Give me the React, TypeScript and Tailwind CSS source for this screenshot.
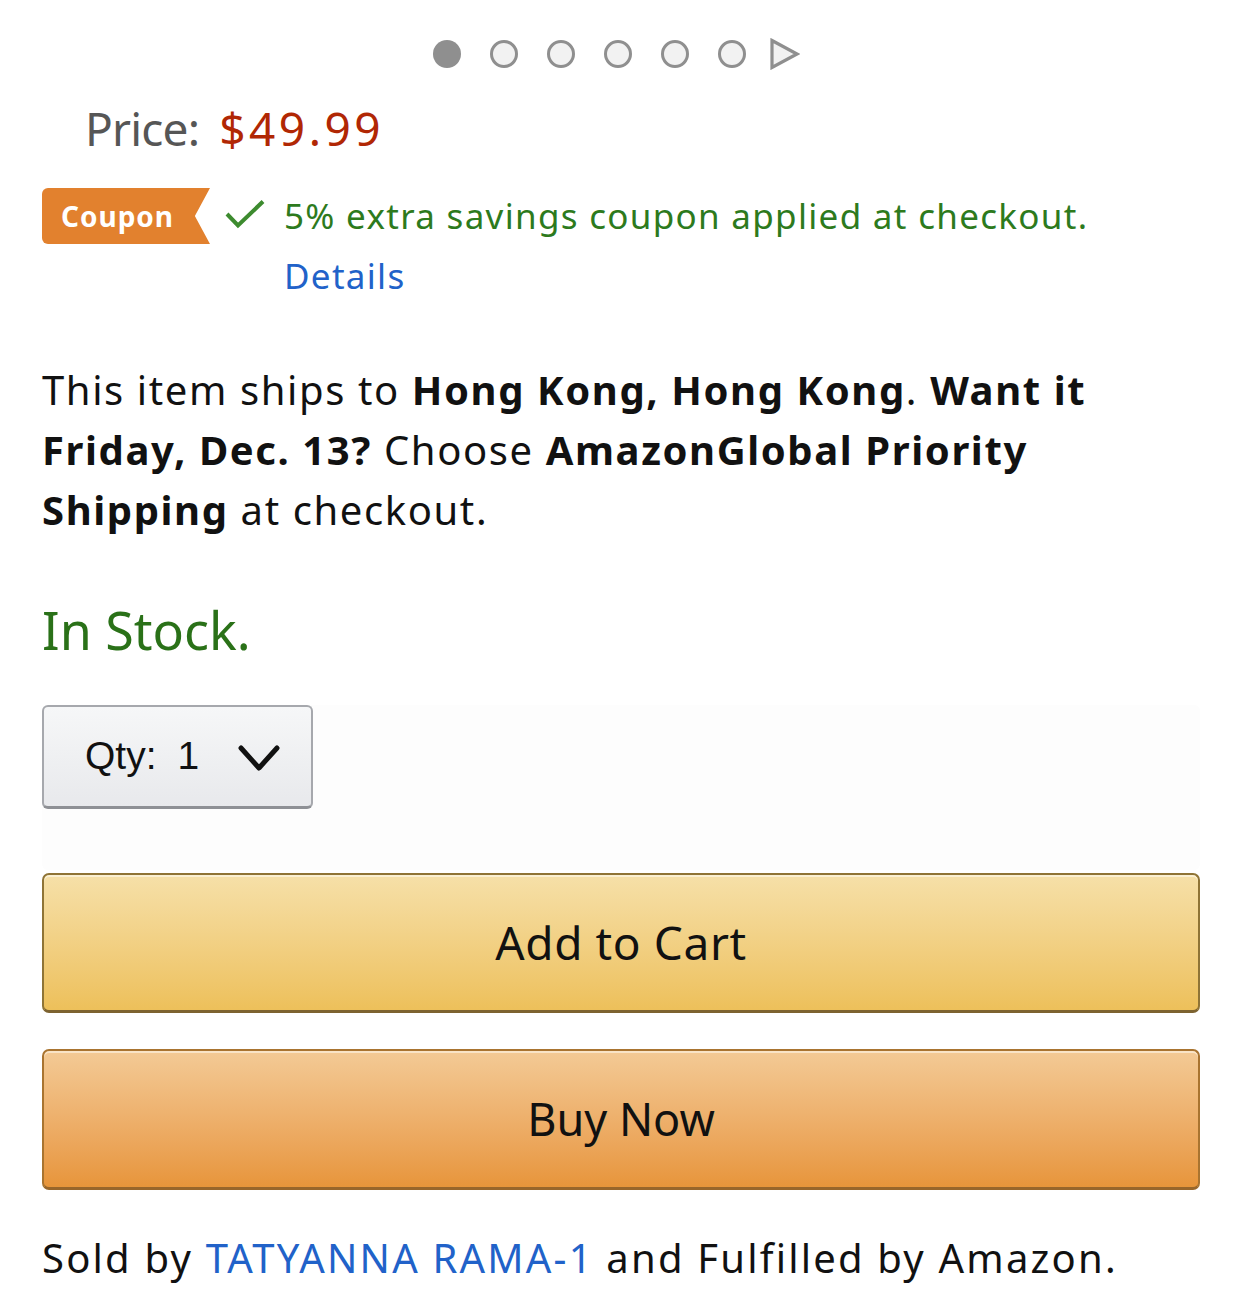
const font = { fontFamily: "'Noto Sans', 'Open Sans', sans-serif" };

function Dots() {
  return (
    <div className="flex items-center justify-center h-[54px] gap-[30px] pr-[10px]">
      <span className="w-[28px] h-[28px] rounded-full bg-[#8f8f8f]" />
      {[0, 1, 2, 3, 4].map((i) => (
        <span key={i} className="w-[28px] h-[28px] rounded-full bg-[#f2f2f2] border-[3px] border-[#8f8f8f] -ml-[1px]" />
      ))}
      <svg width="30" height="32" viewBox="0 0 30 32" className="-ml-[6px]">
        <path d="M2 2.5 L27 16 L2 29.5 Z" fill="#f2f2f2" stroke="#8f8f8f" strokeWidth="3.2" />
      </svg>
    </div>
  );
}

export default function App() {
  return (
    <div className="w-[1242px] h-[1310px] bg-white px-[42px] pt-[27px] text-[#111]" style={font}>
      <Dots />

      {/* price */}
      <div className="flex items-baseline mt-[14px] pl-[43px] h-[66px] text-[46px] leading-[66px]">
        <span className="text-[#565656] tracking-[-0.8px]">Price:</span>
        <span className="text-[#b12704] ml-[20px] tracking-[3.5px]">$49.99</span>
      </div>

      {/* coupon */}
      <div className="flex items-start mt-[27px]">
        <div className="h-[56px] w-[168px] shrink-0 bg-[#e2812e] rounded-l-[6px] text-white font-bold text-[28px] tracking-[1px] flex items-center pl-[19px] [clip-path:polygon(0_0,100%_0,91%_50%,100%_100%,0_100%)]">
          Coupon
        </div>
        <svg width="42" height="32" viewBox="0 0 42 32" className="ml-[14px] mt-[10px] shrink-0">
          <path d="M3 16 L14 27.5 L39 3.5" fill="none" stroke="#3d8b2f" strokeWidth="4" />
        </svg>
        <div className="ml-[18px] text-[35px] leading-[60px] tracking-[1.3px] -mt-[2px]">
          <div className="text-[#2d7a1d]">5% extra savings coupon applied at checkout.</div>
          <div className="text-[#2162c9]">Details</div>
        </div>
      </div>

      {/* shipping */}
      <p className="mt-[54px] text-[40px] leading-[60px] tracking-[1.6px] pr-[40px]">
        This item ships to <b>Hong Kong, Hong Kong</b>. <b>Want it Friday, Dec. 13?</b> Choose{" "}
        <b>AmazonGlobal Priority Shipping</b> at checkout.
      </p>

      <div className="mt-[58px] text-[52px] leading-[64px] text-[#2a7118]">In Stock.</div>

      {/* qty */}
      <div className="mt-[43px] h-[165px] bg-[#fdfdfd] rounded-[6px]">
        <div className="w-[271px] h-[104px] rounded-[6px] border-2 border-[#a6a8ad] border-b-[3px] border-b-[#8e9095] bg-gradient-to-b from-[#f6f7f8] to-[#e8e9ec] flex items-center pl-[41px]">
          <span className="text-[39px] text-[#111]" style={{ fontFamily: "'Liberation Sans', Arial, sans-serif" }}>
            Qty:
          </span>
          <span className="text-[39px] text-[#111] ml-[21px]" style={{ fontFamily: "'Liberation Sans', Arial, sans-serif" }}>
            1
          </span>
          <svg width="44" height="30" viewBox="0 0 44 30" className="ml-[38px] mt-[2px]">
            <path d="M4 5 L22 25 L40 5" fill="none" stroke="#111" strokeWidth="5" strokeLinecap="round" strokeLinejoin="round" />
          </svg>
        </div>
      </div>

      <button className="mt-[3px] w-full h-[140px] rounded-[7px] border-2 border-[#8f7436] border-b-[3px] border-b-[#7d6330] bg-gradient-to-b from-[#f6e0a8] to-[#edc05a] shadow-[inset_0_2px_0_#fbf0d2] text-[46px] tracking-[0.6px] text-[#111]">
        Add to Cart
      </button>

      <button className="mt-[36px] w-full h-[141px] rounded-[7px] border-2 border-[#a97430] border-b-[3px] border-b-[#98662a] bg-gradient-to-b from-[#f3ca95] to-[#e7953a] shadow-[inset_0_2px_0_#f9e4c6] text-[45px] text-[#111]">
        Buy Now
      </button>

      <div className="mt-[38px] text-[40px] leading-[60px] tracking-[2.2px]">
        Sold by <span className="text-[#2162c9]">TATYANNA RAMA-1</span> and Fulfilled by Amazon.
      </div>
    </div>
  );
}
